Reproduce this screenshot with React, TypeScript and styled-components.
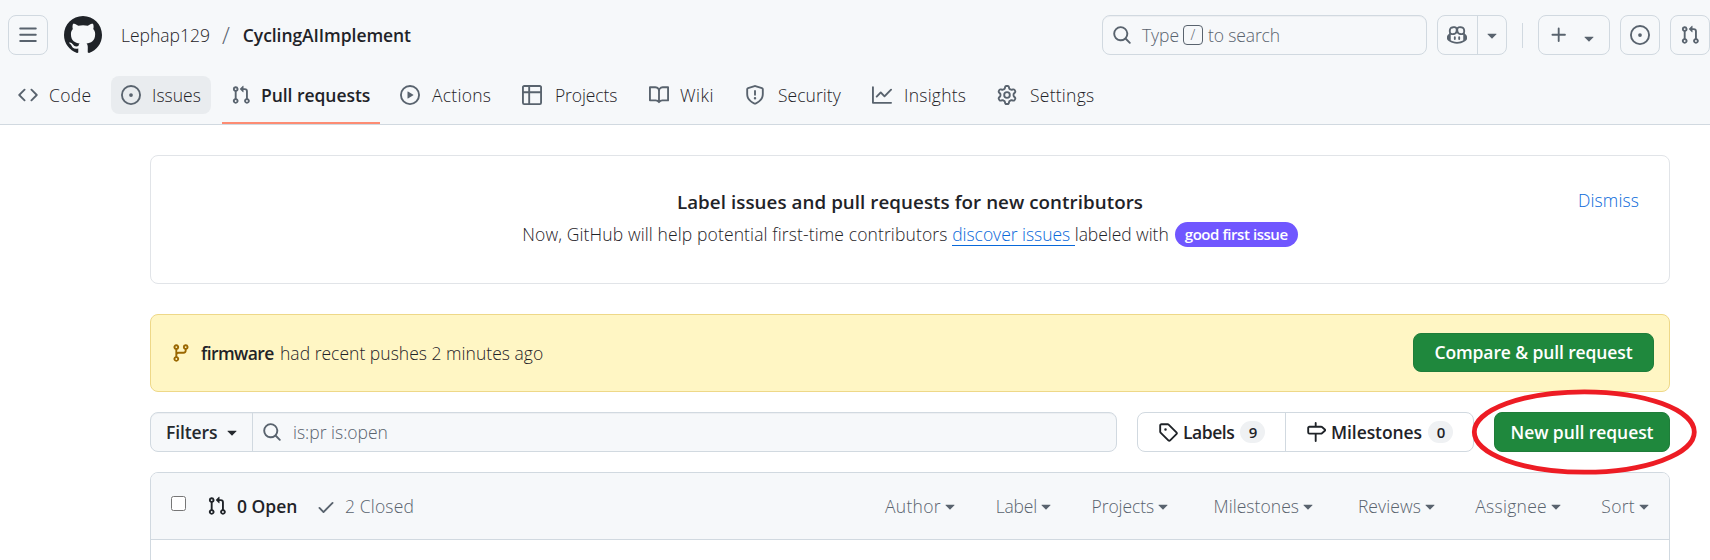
import React from "react";
import styled, { createGlobalStyle } from "styled-components";

const GlobalStyle = createGlobalStyle`
  * { box-sizing: border-box; }
  body {
    margin: 0;
    background: #fff;
    color: #1f2328;
    font-family: "Open Sans", "Noto Sans", sans-serif;
    font-size: 17.5px;
    font-weight: 300;
    line-height: 26px;
    overflow: hidden;
  }
`;

/* 16-unit icon outlines */
const icons = {
  menu: "M1 2.75A.75.75 0 0 1 1.75 2h12.5a.75.75 0 0 1 0 1.5H1.75A.75.75 0 0 1 1 2.75Zm0 5A.75.75 0 0 1 1.75 7h12.5a.75.75 0 0 1 0 1.5H1.75A.75.75 0 0 1 1 7.75ZM1.75 12h12.5a.75.75 0 0 1 0 1.5H1.75a.75.75 0 0 1 0-1.5Z",
  github: "M8 0c4.42 0 8 3.58 8 8a8.013 8.013 0 0 1-5.45 7.59c-.4.08-.55-.17-.55-.38 0-.27.01-1.13.01-2.2 0-.75-.25-1.23-.54-1.48 1.78-.2 3.65-.88 3.65-3.95 0-.88-.31-1.59-.82-2.15.08-.2.36-1.02-.08-2.12 0 0-.67-.22-2.2.82-.64-.18-1.32-.27-2-.27-.68 0-1.36.09-2 .27-1.53-1.03-2.2-.82-2.2-.82-.44 1.1-.16 1.92-.08 2.12-.51.56-.82 1.28-.82 2.15 0 3.06 1.86 3.75 3.64 3.95-.23.2-.44.55-.51 1.07-.46.21-1.61.55-2.33-.66-.15-.24-.6-.83-1.23-.82-.67.01-.27.38.01.53.34.19.73.9.82 1.13.16.45.68 1.31 2.69.94 0 .67.01 1.3.01 1.49 0 .21-.15.45-.55.38A7.995 7.995 0 0 1 0 8c0-4.42 3.58-8 8-8Z",
  code: "m11.28 3.22 4.25 4.25a.75.75 0 0 1 0 1.06l-4.25 4.25a.749.749 0 0 1-1.275-.326.749.749 0 0 1 .215-.734L13.94 8l-3.72-3.72a.749.749 0 0 1 .326-1.275.749.749 0 0 1 .734.215Zm-6.56 0a.751.751 0 0 1 1.042.018.751.751 0 0 1 .018 1.042L2.06 8l3.72 3.72a.749.749 0 0 1-.326 1.275.749.749 0 0 1-.734-.215L.47 8.53a.75.75 0 0 1 0-1.06Z",
  issue: "M8 9.5a1.5 1.5 0 1 0 0-3 1.5 1.5 0 0 0 0 3ZM8 0a8 8 0 1 1 0 16A8 8 0 0 1 8 0ZM1.5 8a6.5 6.5 0 1 0 13 0 6.5 6.5 0 0 0-13 0Z",
  pull: "M1.5 3.25a2.25 2.25 0 1 1 3 2.122v5.256a2.251 2.251 0 1 1-1.5 0V5.372A2.25 2.25 0 0 1 1.5 3.25Zm5.677-.177L9.573.677A.25.25 0 0 1 10 .854V2.5h1A2.5 2.5 0 0 1 13.5 5v5.628a2.251 2.251 0 1 1-1.5 0V5a1 1 0 0 0-1-1h-1v1.646a.25.25 0 0 1-.427.177L7.177 3.427a.25.25 0 0 1 0-.354ZM3.75 2.5a.75.75 0 1 0 0 1.5.75.75 0 0 0 0-1.5Zm0 9.5a.75.75 0 1 0 0 1.5.75.75 0 0 0 0-1.5Zm8.25.75a.75.75 0 1 0 1.5 0 .75.75 0 0 0-1.5 0Z",
  play: "M8 0a8 8 0 1 1 0 16A8 8 0 0 1 8 0ZM1.5 8a6.5 6.5 0 1 0 13 0 6.5 6.5 0 0 0-13 0Zm4.879-2.773 4.264 2.559a.25.25 0 0 1 0 .428l-4.264 2.559A.25.25 0 0 1 6 10.559V5.442a.25.25 0 0 1 .379-.215Z",
  table: "M0 1.75C0 .784.784 0 1.75 0h12.5C15.216 0 16 .784 16 1.75v12.5A1.75 1.75 0 0 1 14.25 16H1.75A1.75 1.75 0 0 1 0 14.25ZM6.5 6.5v8h7.75a.25.25 0 0 0 .25-.25V6.5Zm8-1.5V1.75a.25.25 0 0 0-.25-.25H6.5V5Zm-13 1.5v7.75c0 .138.112.25.25.25H5v-8ZM5 5V1.5H1.75a.25.25 0 0 0-.25.25V5Z",
  book: "M0 1.75A.75.75 0 0 1 .75 1h4.253c1.227 0 2.317.59 3 1.501A3.743 3.743 0 0 1 11.006 1h4.245a.75.75 0 0 1 .75.75v10.5a.75.75 0 0 1-.75.75h-4.507a2.25 2.25 0 0 0-1.591.659l-.622.621a.75.75 0 0 1-1.06 0l-.622-.621A2.25 2.25 0 0 0 5.258 13H.75a.75.75 0 0 1-.75-.75Zm7.251 10.324.004-5.073-.002-2.253A2.25 2.25 0 0 0 5.003 2.5H1.5v9h3.757a3.75 3.75 0 0 1 1.994.574ZM8.755 4.75l-.004 7.322a3.752 3.752 0 0 1 1.992-.572H14.5v-9h-3.495a2.25 2.25 0 0 0-2.25 2.25Z",
  shield: "M7.467.133a1.748 1.748 0 0 1 1.066 0l5.25 1.68A1.75 1.75 0 0 1 15 3.48V7c0 1.566-.32 3.182-1.303 4.682-.983 1.498-2.585 2.813-5.032 3.855a1.697 1.697 0 0 1-1.33 0c-2.447-1.042-4.049-2.357-5.032-3.855C1.32 10.182 1 8.566 1 7V3.48a1.75 1.75 0 0 1 1.217-1.667Zm.61 1.429a.25.25 0 0 0-.153 0l-5.25 1.68a.25.25 0 0 0-.174.238V7c0 1.358.275 2.666 1.057 3.86.784 1.194 2.121 2.34 4.366 3.297a.196.196 0 0 0 .154 0c2.245-.956 3.582-2.104 4.366-3.298C13.225 9.666 13.5 8.36 13.5 7V3.48a.251.251 0 0 0-.174-.237l-5.25-1.68ZM8.75 4.75v3a.75.75 0 0 1-1.5 0v-3a.75.75 0 0 1 1.5 0ZM9 10.5a1 1 0 1 1-2 0 1 1 0 0 1 2 0Z",
  graph: "M1.5 1.75V13.5h13.75a.75.75 0 0 1 0 1.5H.75a.75.75 0 0 1-.75-.75V1.75a.75.75 0 0 1 1.5 0Zm14.28 2.53-5.25 5.25a.75.75 0 0 1-1.06 0L7 7.06 4.28 9.78a.751.751 0 0 1-1.042-.018.751.751 0 0 1-.018-1.042l3.25-3.25a.75.75 0 0 1 1.06 0L10 7.94l4.72-4.72a.751.751 0 0 1 1.042.018.751.751 0 0 1 .018 1.042Z",
  gear: "M8 0a8.2 8.2 0 0 1 .701.031C9.444.095 9.99.645 10.16 1.29l.288 1.107c.018.066.079.158.212.224.231.114.454.243.668.386.123.082.233.09.299.071l1.103-.303c.644-.176 1.392.021 1.82.63.27.385.506.792.704 1.218.315.675.111 1.422-.364 1.891l-.814.806c-.049.048-.098.147-.088.294.016.257.016.515 0 .772-.01.147.038.246.088.294l.814.806c.475.469.679 1.216.364 1.891a7.977 7.977 0 0 1-.704 1.217c-.428.61-1.176.807-1.82.63l-1.102-.302c-.067-.019-.177-.011-.3.071a5.909 5.909 0 0 1-.668.386c-.133.066-.194.158-.211.224l-.29 1.106c-.168.646-.715 1.196-1.458 1.26a8.006 8.006 0 0 1-1.402 0c-.743-.064-1.289-.614-1.458-1.26l-.289-1.106c-.018-.066-.079-.158-.212-.224a5.738 5.738 0 0 1-.668-.386c-.123-.082-.233-.09-.299-.071l-1.103.303c-.644.176-1.392-.021-1.82-.63a8.12 8.12 0 0 1-.704-1.218c-.315-.675-.111-1.422.363-1.891l.815-.806c.05-.048.098-.147.088-.294a6.214 6.214 0 0 1 0-.772c.01-.147-.038-.246-.088-.294l-.815-.806C.635 6.045.431 5.298.746 4.623a7.92 7.92 0 0 1 .704-1.217c.428-.61 1.176-.807 1.82-.63l1.102.302c.067.019.177.011.3-.071.214-.143.437-.272.668-.386.133-.066.194-.158.211-.224l.29-1.106C6.009.645 6.556.095 7.299.03 7.53.01 7.764 0 8 0Zm-.571 1.525c-.036.003-.108.036-.137.146l-.289 1.105c-.147.561-.549.967-.998 1.189-.173.086-.34.183-.5.29-.417.278-.97.423-1.529.27l-1.103-.303c-.109-.03-.175.016-.195.045-.22.312-.412.644-.573.99-.014.031-.021.11.059.19l.815.806c.411.406.562.957.53 1.456a4.709 4.709 0 0 0 0 .582c.032.499-.119 1.05-.53 1.456l-.815.806c-.081.08-.073.159-.059.19.162.346.353.677.573.989.02.03.085.076.195.046l1.102-.303c.56-.153 1.113-.008 1.53.27.161.107.328.204.501.29.447.222.85.629.997 1.189l.289 1.105c.029.109.101.143.137.146a6.6 6.6 0 0 0 1.142 0c.036-.003.108-.036.137-.146l.289-1.105c.147-.561.549-.967.998-1.189.173-.086.34-.183.5-.29.417-.278.97-.423 1.529-.27l1.103.303c.109.029.175-.016.195-.045.22-.313.411-.644.573-.99.014-.031.021-.11-.059-.19l-.815-.806c-.411-.406-.562-.957-.53-1.456a4.709 4.709 0 0 0 0-.582c-.032-.499.119-1.05.53-1.456l.815-.806c.081-.08.073-.159.059-.19a6.464 6.464 0 0 0-.573-.989c-.02-.03-.085-.076-.195-.046l-1.102.303c-.56.153-1.113.008-1.53-.27a4.44 4.44 0 0 0-.501-.29c-.447-.222-.85-.629-.997-1.189l-.289-1.105c-.029-.11-.101-.143-.137-.146a6.6 6.6 0 0 0-1.142 0ZM11 8a3 3 0 1 1-6 0 3 3 0 0 1 6 0ZM9.5 8a1.5 1.5 0 1 0-3.001.001A1.5 1.5 0 0 0 9.5 8Z",
  search: "M10.68 11.74a6 6 0 0 1-7.922-8.982 6 6 0 0 1 8.982 7.922l3.04 3.04a.749.749 0 0 1-.326 1.275.749.749 0 0 1-.734-.215ZM11.5 7a4.499 4.499 0 1 0-8.997 0A4.499 4.499 0 0 0 11.5 7Z",
  triangle: "m4.427 7.427 3.396 3.396a.25.25 0 0 0 .354 0l3.396-3.396A.25.25 0 0 0 11.396 7H4.604a.25.25 0 0 0-.177.427Z",
  plus: "M7.75 2a.75.75 0 0 1 .75.75V7h4.25a.75.75 0 0 1 0 1.5H8.5v4.25a.75.75 0 0 1-1.5 0V8.5H2.75a.75.75 0 0 1 0-1.5H7V2.75A.75.75 0 0 1 7.75 2Z",
  branch: "M9.5 3.25a2.25 2.25 0 1 1 3 2.122V6A2.5 2.5 0 0 1 10 8.5H6a1 1 0 0 0-1 1v1.128a2.251 2.251 0 1 1-1.5 0V5.372a2.25 2.25 0 1 1 1.5 0v1.836A2.493 2.493 0 0 1 6 7h4a1 1 0 0 0 1-1v-.628A2.25 2.25 0 0 1 9.5 3.25Zm-6 0a.75.75 0 1 0 1.5 0 .75.75 0 0 0-1.5 0Zm8.25-.75a.75.75 0 1 0 0 1.5.75.75 0 0 0 0-1.5ZM4.25 12a.75.75 0 1 0 0 1.5.75.75 0 0 0 0-1.5Z",
  tag: "M1 7.775V2.75C1 1.784 1.784 1 2.75 1h5.025c.464 0 .91.184 1.238.513l6.25 6.25a1.75 1.75 0 0 1 0 2.474l-5.026 5.026a1.75 1.75 0 0 1-2.474 0l-6.25-6.25A1.752 1.752 0 0 1 1 7.775Zm1.5 0c0 .066.026.13.073.177l6.25 6.25a.25.25 0 0 0 .354 0l5.025-5.025a.25.25 0 0 0 0-.354l-6.25-6.25a.25.25 0 0 0-.177-.073H2.75a.25.25 0 0 0-.25.25ZM6 5a1 1 0 1 1 0 2 1 1 0 0 1 0-2Z",
  milestone: "M7.75 0a.75.75 0 0 1 .75.75V3h3.634c.414 0 .814.147 1.13.414l2.07 1.75a1.75 1.75 0 0 1 0 2.672l-2.07 1.75a1.75 1.75 0 0 1-1.13.414H8.5v5.25a.75.75 0 0 1-1.5 0V10H2.75A1.75 1.75 0 0 1 1 8.25v-3.5C1 3.784 1.784 3 2.75 3H7V.75A.75.75 0 0 1 7.75 0Zm4.384 8.5a.25.25 0 0 0 .161-.059l2.07-1.75a.248.248 0 0 0 0-.382l-2.07-1.75a.25.25 0 0 0-.161-.059H2.75a.25.25 0 0 0-.25.25v3.5c0 .138.112.25.25.25h9.384Z",
  check: "M13.78 4.22a.75.75 0 0 1 0 1.06l-7.25 7.25a.75.75 0 0 1-1.06 0L2.22 9.28a.751.751 0 0 1 .018-1.042.751.751 0 0 1 1.042-.018L6 10.94l6.72-6.72a.75.75 0 0 1 1.06 0Z",
  copilot: "M7.998 15.035c-4.562 0-7.873-2.914-7.998-3.749V9.338c.085-.628.677-1.686 1.588-2.065.013-.07.024-.143.036-.218.029-.183.06-.384.126-.612-.201-.508-.254-1.084-.254-1.656 0-.87.128-1.769.693-2.484.579-.733 1.494-1.124 2.724-1.261 1.206-.134 2.262.034 2.944.765.05.053.096.108.139.165.044-.057.094-.112.143-.165.682-.731 1.738-.899 2.944-.765 1.23.137 2.145.528 2.724 1.261.566.715.693 1.614.693 2.484 0 .572-.053 1.148-.254 1.656.066.228.098.429.126.612.012.076.024.148.037.218.924.385 1.522 1.471 1.591 2.095v1.872c0 .766-3.351 3.795-8.002 3.795Zm0-1.485c2.28 0 4.584-1.11 5.002-1.433V7.862l-.023-.116c-.49.21-1.075.291-1.727.291-1.146 0-2.059-.327-2.71-.991A3.222 3.222 0 0 1 8 6.303a3.24 3.24 0 0 1-.544.743c-.65.664-1.563.991-2.71.991-.652 0-1.236-.081-1.727-.291l-.023.116v4.255c.419.323 2.722 1.433 5.002 1.433ZM6.762 2.83c-.193-.206-.637-.413-1.682-.297-1.019.113-1.479.404-1.713.7-.247.312-.369.789-.369 1.554 0 .793.129 1.171.308 1.371.162.181.519.379 1.442.379.853 0 1.339-.235 1.638-.54.315-.322.527-.827.617-1.553.117-.935-.037-1.395-.241-1.614Zm4.155-.297c-1.044-.116-1.488.091-1.681.297-.204.219-.359.679-.242 1.614.091.726.303 1.231.618 1.553.299.305.784.54 1.638.54.922 0 1.28-.198 1.442-.379.179-.2.308-.578.308-1.371 0-.765-.123-1.242-.37-1.554-.233-.296-.693-.587-1.713-.7ZM6.25 9.037a.75.75 0 0 1 .75.75v1.501a.75.75 0 0 1-1.5 0V9.787a.75.75 0 0 1 .75-.75Zm4.25.75v1.501a.75.75 0 0 1-1.5 0V9.787a.75.75 0 0 1 1.5 0Z",
};

const Svg = styled.svg<{ $size: number }>`
  width: ${p => p.$size}px;
  height: ${p => p.$size}px;
  flex: none;
  display: block;
  fill: currentColor;
`;

function Icon({ name, size = 20, className }: { name: keyof typeof icons; size?: number; className?: string }) {
  return (
    <Svg className={className} $size={size} viewBox="0 0 16 16" aria-hidden>
      <path d={icons[name]} />
    </Svg>
  );
}

/* A single line of text; width reserves its slot, track adjusts letter spacing */
const Text = styled.span<{ $w?: number; $track?: number; $strong?: boolean }>`
  flex: none;
  width: ${p => (p.$w ? `${p.$w}px` : "auto")};
  letter-spacing: ${p => p.$track ?? 0}px;
  font-weight: ${p => (p.$strong ? 600 : 300)};
  white-space: pre;
`;

const Header = styled.header`
  height: 125px;
  background: #f6f8fa;
  border-bottom: 1px solid #d1d9e0;
  display: flex;
  flex-direction: column;
`;

const TopBar = styled.div`
  height: 76px;
  padding: 15px 0 21px 8px;
  display: flex;
  align-items: center;
`;

const Box = styled.div<{ $w: number; $ml?: number }>`
  flex: none;
  width: ${p => p.$w}px;
  height: 40px;
  margin-left: ${p => p.$ml ?? 0}px;
  border: 1px solid #d1d9e0;
  border-radius: 8px;
  color: #59636e;
  display: flex;
  align-items: center;
  justify-content: center;
`;

const Logo = styled.div`
  margin: 0 19px 0 16px;
  padding-bottom: 1px;
`;

const Slash = styled(Text)`
  margin: 0 13px 0 11px;
  font-size: 23px;
  color: #59636e;
`;

const SearchBox = styled(Box)`
  margin-left: auto;
  padding-left: 9px;
  justify-content: flex-start;
  box-shadow: inset 0 1px 0 rgba(31, 35, 40, 0.04);
  > svg { margin-right: 10px; }
`;

const Key = styled.kbd`
  width: 20px;
  height: 20px;
  margin: 0 5px 0 4px;
  border: 1px solid #59636e;
  border-radius: 4px;
  font: 300 14px/18px "Open Sans", sans-serif;
  text-align: center;
`;

const SplitHalf = styled.div<{ $w: number; $divided?: boolean }>`
  width: ${p => p.$w}px;
  height: 38px;
  padding-right: ${p => (p.$divided ? 1 : 0)}px;
  border-right: ${p => (p.$divided ? "1px solid #d1d9e0" : "0")};
  display: flex;
  align-items: center;
  justify-content: center;
`;

const Separator = styled.div`
  flex: none;
  width: 1px;
  height: 25px;
  margin: 0 15px;
  background: #d1d9e0;
`;

const LowCaret = styled(Icon)`
  margin: 6px 0 0 10px;
`;

const Tabs = styled.nav`
  height: 48px;
  padding-left: 8px;
  display: flex;
  gap: 10px;
`;

const Tab = styled.div<{ $w: number; $gap: number; $state?: string }>`
  flex: none;
  width: ${p => p.$w}px;
  height: ${p => (p.$state === "active" ? 48 : 38)}px;
  margin-left: ${p => (p.$state === "active" ? 1 : 0)}px;
  padding: ${p => (p.$state === "active" ? "0 9px 8px" : "0 10px")};
  border-radius: ${p => (p.$state === "active" ? 0 : 8)}px;
  border-bottom: ${p => (p.$state === "active" ? "2px solid #fd8c73" : "0")};
  background: ${p => (p.$state === "hover" ? "#e9ecef" : "transparent")};
  display: flex;
  align-items: center;
  gap: ${p => p.$gap}px;
  > svg { color: #59636e; }
`;

const Page = styled.main`
  width: 1520px;
  margin: 30px 0 0 150px;
`;

const Tip = styled.section`
  height: 129px;
  border: 1px solid #e1e4e8;
  border-radius: 8px;
  display: grid;
  grid-template-columns: 1fr auto 1fr;
  align-items: start;
`;

const TipBody = styled.div`
  grid-column: 2;
  padding-top: 33px;
  display: flex;
  flex-direction: column;
  align-items: center;
  gap: 6px;
`;

const TipTitle = styled.h3`
  margin: 0;
  font-size: 18.75px;
  font-weight: 600;
  line-height: 26px;
  letter-spacing: 0.06px;
`;

const TipLine = styled.div`
  display: flex;
  align-items: center;
`;

const Link = styled.a<{ $under?: boolean }>`
  color: #0969da;
  white-space: pre;
  letter-spacing: -0.03px;
  line-height: 22px;
  border-bottom: ${p => (p.$under ? "1px solid #0969da" : "0")};
`;

const Pill = styled.span`
  height: 25px;
  width: 123px;
  margin-left: 6px;
  border-radius: 13px;
  background: #7057ff;
  color: #fff;
  font-size: 15px;
  font-weight: 600;
  line-height: 24px;
  letter-spacing: -0.45px;
  text-align: center;
`;

const Dismiss = styled(Link)`
  justify-self: end;
  margin: 33px 30px 0 0;
  letter-spacing: 0.1px;
`;

const PushNotice = styled.section`
  height: 78px;
  margin-top: 30px;
  padding: 0 15px 0 20px;
  border: 1px solid #eed888;
  border-radius: 8px;
  background: #fff6c4;
  display: flex;
  align-items: center;
  > svg { color: #9a6700; margin-right: 10px; }
`;

const GreenButton = styled.button<{ $w: number; $h: number; $track: number }>`
  width: ${p => p.$w}px;
  height: ${p => p.$h}px;
  margin: 0 0 ${p => 40 - p.$h}px auto;
  padding: 0 0 1px;
  border: 1px solid #1f7d3a;
  border-radius: 8px;
  background: #1f883d;
  color: #fff;
  font: 600 17.5px/26px "Open Sans", sans-serif;
  letter-spacing: ${p => p.$track}px;
  white-space: nowrap;
`;

const Toolbar = styled.div`
  margin-top: 20px;
  display: flex;
`;

const FilterGroup = styled(Box)`
  background: #f6f8fa;
  justify-content: flex-start;
  box-shadow: inset 0 1px 0 rgba(31, 35, 40, 0.04);
  > svg { margin: 0 11px 0 9px; }
`;

const FilterButton = styled.div`
  width: 102px;
  height: 38px;
  padding: 0 0 1px 15px;
  border-right: 1px solid #d1d9e0;
  color: #25292e;
  display: flex;
  align-items: center;
`;

const LinkHalf = styled.div<{ $w: number; $divided?: boolean }>`
  width: ${p => p.$w}px;
  height: 38px;
  padding-left: 20px;
  border-right: ${p => (p.$divided ? "1px solid #d1d9e0" : "0")};
  color: #1f2328;
  display: flex;
  align-items: center;
  > svg { margin-right: 5px; }
`;

const Count = styled.span`
  width: 25px;
  height: 22px;
  margin-left: 5px;
  border-radius: 12px;
  background: #eff1f3;
  font-size: 15px;
  font-weight: 600;
  line-height: 22px;
  padding-left: 1px;
  text-align: center;
`;

const ButtonSpot = styled.div`
  position: relative;
  height: 40px;
  margin-left: 20px;
`;

const Ring = styled.svg`
  position: absolute;
  left: -23px;
  top: -23px;
  width: 227px;
  height: 87px;
  pointer-events: none;
`;

const Table = styled.section`
  height: 110px;
  margin-top: 20px;
  border: 1px solid #d1d9e0;
  border-radius: 8px 8px 0 0;
`;

const TableHead = styled.div`
  height: 67px;
  padding: 0 15px 0 20px;
  border-bottom: 1px solid #d1d9e0;
  border-radius: 7px 7px 0 0;
  background: #f6f8fa;
  color: #59636e;
  display: flex;
  align-items: center;
`;

const Check = styled.input`
  width: 15px;
  height: 15px;
  margin: 0 21px 5px 0;
`;

const Dark = styled.div`
  color: #1f2328;
  display: flex;
  align-items: center;
  gap: 10px;
  margin-right: 16px;
  + svg { margin: 2px 9px 0 0; }
`;

const Menus = styled.div`
  margin-left: auto;
  display: flex;
`;

const Menu = styled.div<{ $w: number }>`
  width: ${p => p.$w}px;
  display: flex;
  align-items: center;
  justify-content: flex-end;
  > svg { margin-left: -1px; }
`;

type TabItem = { icon: keyof typeof icons; label: string; w: number; gap: number; track?: number; state?: string };
const tabs: TabItem[] = [
  { icon: "code", label: "Code", w: 93, gap: 11, track: 0.3 },
  { icon: "issue", label: "Issues", w: 100, gap: 11, state: "hover" },
  { icon: "pull", label: "Pull requests", w: 158, gap: 10, track: -0.05, state: "active" },
  { icon: "play", label: "Actions", w: 112, gap: 12, track: 0.25 },
  { icon: "table", label: "Projects", w: 117, gap: 13, track: -0.12 },
  { icon: "book", label: "Wiki", w: 86, gap: 11, track: 0.5 },
  { icon: "shield", label: "Security", w: 117, gap: 13, track: 0.05 },
  { icon: "graph", label: "Insights", w: 115, gap: 12, track: 0.25 },
  { icon: "gear", label: "Settings", w: 117, gap: 13, track: 0.25 },
];

const menus = [
  { label: "Author", w: 90, track: 0.32 },
  { label: "Label", w: 96, track: -0.2 },
  { label: "Projects", w: 117, track: -0.1 },
  { label: "Milestones", w: 145, track: 0.05 },
  { label: "Reviews", w: 122, track: 0.1 },
  { label: "Assignee", w: 126, track: 0.3 },
  { label: "Sort", w: 88, track: 0.3 },
];

export default function App() {
  return (
    <>
      <GlobalStyle />
      <Header>
        <TopBar>
          <Box $w={40}><Icon name="menu" /></Box>
          <Logo><Icon name="github" size={38} /></Logo>
          <Text $w={90}>Lephap129</Text>
          <Slash>/</Slash>
          <Text $strong $track={-0.07}>CyclingAIImplement</Text>
          <SearchBox $w={325}>
            <Icon name="search" />
            <Text $track={-0.06}>Type</Text>
            <Key>/</Key>
            <Text $track={-0.13}>to search</Text>
          </SearchBox>
          <Box $w={70} $ml={10}>
            <SplitHalf $w={40} $divided><Icon name="copilot" /></SplitHalf>
            <SplitHalf $w={28}><Icon name="triangle" /></SplitHalf>
          </Box>
          <Separator />
          <Box $w={72}><Icon name="plus" /><LowCaret name="triangle" /></Box>
          <Box $w={40} $ml={10}><Icon name="issue" /></Box>
          <Box $w={40} $ml={10}><Icon name="pull" /></Box>
        </TopBar>
        <Tabs>
          {tabs.map(t => (
            <Tab key={t.label} $w={t.w} $gap={t.gap} $state={t.state}>
              <Icon name={t.icon} />
              <Text $strong={t.state === "active"} $track={t.track}>{t.label}</Text>
            </Tab>
          ))}
        </Tabs>
      </Header>
      <Page>
        <Tip>
          <TipBody>
            <TipTitle>Label issues and pull requests for new contributors</TipTitle>
            <TipLine>
              <Text $track={0.12}>Now, GitHub will help potential first-time contributors </Text>
              <Link $under>discover issues </Link>
              <Text $track={-0.05}>labeled with</Text>
              <Pill>good first issue</Pill>
            </TipLine>
          </TipBody>
          <Dismiss>Dismiss</Dismiss>
        </Tip>
        <PushNotice>
          <Icon name="branch" />
          <Text $strong $w={79} $track={-0.6}>firmware</Text>
          <Text $track={0.02}>had recent pushes 2 minutes ago</Text>
          <GreenButton $w={241} $h={39} $track={-0.12}>Compare &amp; pull request</GreenButton>
        </PushNotice>
        <Toolbar>
          <FilterGroup $w={967}>
            <FilterButton>
              <Text $strong $w={56} $track={-0.1}>Filters</Text>
              <Icon name="triangle" />
            </FilterButton>
            <Icon name="search" />
            <Text>is:pr is:open</Text>
          </FilterGroup>
          <Box $w={337} $ml={20}>
            <LinkHalf $w={148} $divided>
              <Icon name="tag" />
              <Text $strong $w={52} $track={-0.45}>Labels</Text>
              <Count>9</Count>
            </LinkHalf>
            <LinkHalf $w={187}>
              <Icon name="milestone" />
              <Text $strong $w={92} $track={-0.08}>Milestones</Text>
              <Count>0</Count>
            </LinkHalf>
          </Box>
          <ButtonSpot>
            <GreenButton $w={176} $h={40} $track={-0.07}>New pull request</GreenButton>
            <Ring viewBox="0 0 227 87">
              <ellipse cx="113.3" cy="43" rx="110" ry="40.2" fill="none" stroke="#ed1c24" strokeWidth="4.8" />
            </Ring>
          </ButtonSpot>
        </Toolbar>
        <Table>
          <TableHead>
            <Check type="checkbox" />
            <Dark><Icon name="pull" /><Text $strong $w={63}>0 Open</Text></Dark>
            <Icon name="check" />
            <Text $track={0.15}>2 Closed</Text>
            <Menus>
              {menus.map(m => (
                <Menu key={m.label} $w={m.w}>
                  <Text $track={m.track}>{m.label}</Text>
                  <Icon name="triangle" />
                </Menu>
              ))}
            </Menus>
          </TableHead>
        </Table>
      </Page>
    </>
  );
}
